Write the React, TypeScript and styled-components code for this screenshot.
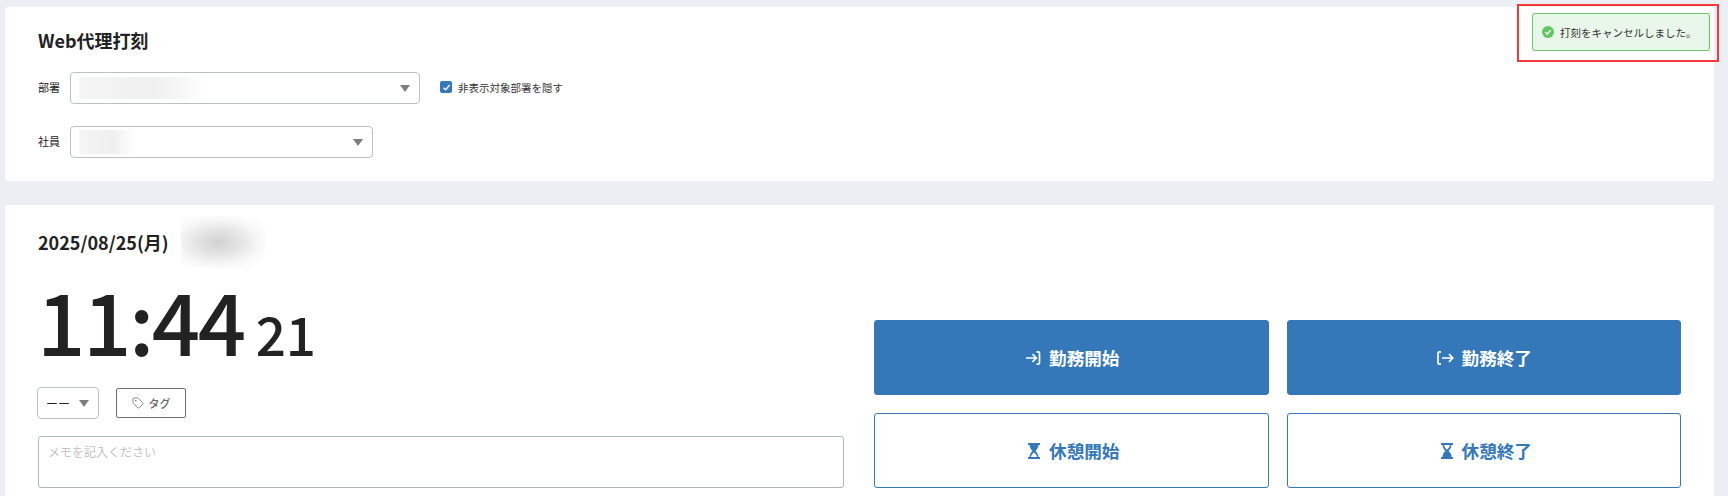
import styled, { createGlobalStyle } from 'styled-components';
import { Tag } from 'lucide-react';

const BLUE = '#3478b9';

const GlobalStyle = createGlobalStyle`
  html, body {
    margin: 0;
    height: 100%;
    overflow: hidden;
    background: #ebeef3;
  }
  * { box-sizing: border-box; }
  body {
    font-family: "Noto Sans CJK JP", "Noto Sans", sans-serif;
    color: #222;
  }
`;

const Page = styled.div`
  height: 496px;
  overflow: hidden;
  padding: 7px 14px 0 5px;
  display: flex;
  flex-direction: column;
  gap: 24px;
`;

const Card = styled.section`
  background: #fff;
  border-radius: 3px;
  padding: 0 33px 0 32px;
  flex: none;
`;

const FormCard = styled(Card)`
  height: 174px;
  padding-top: 20px;
`;

const Title = styled.h2`
  margin: 0 0 18px 1px;
  font-size: 18px;
  line-height: 27px;
  font-weight: 700;
`;

const FormRow = styled.div`
  display: flex;
  align-items: center;
  height: 32px;
  margin-bottom: 22px;
`;

const FieldLabel = styled.span`
  width: 33px;
  padding: 0 0 2px 1px;
  font-size: 11px;
`;

const SelectBox = styled.div<{ $width: number }>`
  position: relative;
  width: ${(p) => p.$width}px;
  height: 32px;
  background: #fff;
  border: 1px solid #b9bfc7;
  border-radius: 4px;
  display: flex;
  align-items: center;
  justify-content: space-between;
  padding: 0 9px 0 8px;
`;

const Caret = styled.i`
  width: 0;
  height: 0;
  border-left: 5px solid transparent;
  border-right: 5px solid transparent;
  border-top: 7px solid #7d7d7d;
`;

const Blur = styled.span<{ $width: number; $height: number }>`
  display: block;
  width: ${(p) => p.$width}px;
  height: ${(p) => p.$height}px;
  background: linear-gradient(90deg, #f5f5f5 0%, #efefef 60%, #fff 100%);
`;

const CheckWrap = styled.label`
  display: flex;
  align-items: center;
  gap: 6px;
  margin-left: 20px;
  padding-bottom: 2px;
  font-size: 10.5px;
  color: #333;
`;

const CheckBox = styled.span`
  width: 12px;
  height: 12px;
  border-radius: 2px;
  background: ${BLUE};
  display: flex;
  align-items: center;
  justify-content: center;
`;

const ClockCard = styled(Card)`
  padding-top: 15px;
  padding-bottom: 30px;
`;

const DateRow = styled.div`
  display: flex;
  align-items: center;
  height: 47px;
  padding: 0 0 4px 1px;
  gap: 12px;
`;

const DateText = styled.span`
  font-size: 18px;
  font-weight: 700;
`;

const NameBlur = styled.span`
  width: 84px;
  height: 52px;
  background: radial-gradient(ellipse at 44% 50%, #d2d2d2 0%, #e2e2e2 30%, #f7f7f7 62%, #fff 85%);
`;

const ClockBody = styled.div`
  display: grid;
  grid-template-columns: 808px 1fr;
  column-gap: 29px;
  align-items: end;
`;

const ClockColumn = styled.div`
  display: flex;
  flex-direction: column;
`;

const Time = styled.div`
  display: flex;
  align-items: baseline;
  height: 118px;
  line-height: 104px;
  gap: 12px;
  color: #222;
`;

const HourMinute = styled.span`
  font-size: 85px;
  font-weight: 500;
  letter-spacing: -2.5px;
`;

const Seconds = styled.span`
  font-size: 53px;
  font-weight: 500;
`;

const ControlRow = styled.div`
  display: flex;
  align-items: center;
  gap: 17px;
  margin-top: 2px;
`;

const TagButton = styled.button`
  width: 70px;
  height: 30px;
  background: #fff;
  border: 1px solid #6f6f6f;
  border-radius: 2px;
  display: flex;
  align-items: center;
  justify-content: center;
  gap: 5px;
  font: 500 11px "Noto Sans CJK JP", sans-serif;
  color: #666;
`;

const Memo = styled.div`
  height: 52px;
  margin: 17px 1px 0;
  border: 1px solid #aeb5bd;
  border-radius: 3px;
  padding: 6px 9px;
  font-size: 12px;
  color: #c4c4c4;
`;

const ButtonGrid = styled.div`
  display: grid;
  grid-template-columns: 1fr 1fr;
  gap: 18px;
`;

const ActionButton = styled.button<{ $filled?: boolean }>`
  height: 75px;
  border-radius: 3px;
  border: 1px solid ${BLUE};
  background: ${(p) => (p.$filled ? BLUE : '#fff')};
  color: ${(p) => (p.$filled ? '#fff' : BLUE)};
  display: flex;
  align-items: center;
  justify-content: center;
  gap: 8px;
  font: 700 17.6px "Noto Sans CJK JP", sans-serif;
`;

const Toast = styled.div`
  position: absolute;
  top: 13px;
  left: 1532px;
  width: 178px;
  height: 38px;
  background: #e9f7ea;
  border: 1px solid #69c968;
  border-radius: 3px;
  display: flex;
  align-items: center;
  gap: 6px;
  padding-left: 9px;
  font-size: 10.5px;
  color: #333;
`;

const Highlight = styled.div`
  position: absolute;
  top: 4px;
  left: 1517px;
  width: 202px;
  height: 58px;
  border: 2px solid #f33a3a;
`;

const LoginIcon = () => (
  <svg width="18" height="16" viewBox="0 0 18 16" fill="none" stroke="currentColor" strokeWidth="1.7">
    <path d="M3 8h10M9.5 4.2 13.3 8l-3.8 3.8" />
    <path d="M13.5 1.8H15c1 0 1.5.6 1.5 1.5v9.4c0 .9-.5 1.5-1.5 1.5h-1.5" />
  </svg>
);

const LogoutIcon = () => (
  <svg width="18" height="16" viewBox="0 0 18 16" fill="none" stroke="currentColor" strokeWidth="1.7">
    <path d="M5 1.8H3.5C2.5 1.8 2 2.4 2 3.3v9.4c0 .9.5 1.5 1.5 1.5H5" />
    <path d="M6 8h11M13 4.2 16.8 8 13 11.8" />
  </svg>
);

const Hourglass = ({ end }: { end?: boolean }) => (
  <svg width="18" height="16" viewBox="0 0 18 16" fill="currentColor">
    <rect x="5" y="0" width="12" height="2" />
    <rect x="5" y="14" width="12" height="2" />
    {end ? (
      <path d="M6.5 2h1.5c.4 2 1.7 3.6 3 4.4 1.3-.8 2.6-2.4 3-4.4h1.5c-.3 2.7-1.6 4.7-3 6 2 1.3 3 3.7 3 6h-9c0-2.3 1-4.7 3-6-1.4-1.3-2.7-3.3-3-6Z" />
    ) : (
      <path d="M6.5 2h9c-.3 2.7-1.6 4.7-3 6 1.4 1.3 2.7 3.3 3 6H14c-.4-2-1.7-3.6-3-4.4-1.3.8-2.6 2.4-3 4.4H6.5c.3-2.7 1.6-4.7 3-6-1.4-1.3-2.7-3.3-3-6Z" />
    )}
  </svg>
);

export default function App() {
  return (
    <>
      <GlobalStyle />
      <Page>
        <FormCard>
          <Title>Web代理打刻</Title>
          <FormRow>
            <FieldLabel>部署</FieldLabel>
            <SelectBox $width={350}>
              <Blur $width={127} $height={22} />
              <Caret />
            </SelectBox>
            <CheckWrap>
              <CheckBox>
                <svg width="9" height="9" viewBox="0 0 9 9" fill="none" stroke="#fff" strokeWidth="1.3">
                  <path d="M1.5 4.8 3.6 6.8 7.6 2" />
                </svg>
              </CheckBox>
              非表示対象部署を隠す
            </CheckWrap>
          </FormRow>
          <FormRow>
            <FieldLabel>社員</FieldLabel>
            <SelectBox $width={303}>
              <Blur $width={56} $height={24} />
              <Caret />
            </SelectBox>
          </FormRow>
        </FormCard>
        <ClockCard>
          <DateRow>
            <DateText>2025/08/25(月)</DateText>
            <NameBlur />
          </DateRow>
          <ClockBody>
            <ClockColumn>
              <Time>
                <HourMinute>11:44</HourMinute>
                <Seconds>21</Seconds>
              </Time>
              <ControlRow>
                <SelectBox $width={62}>
                  <span style={{ fontSize: 12 }}>ーー</span>
                  <Caret />
                </SelectBox>
                <TagButton>
                  <Tag size={12} strokeWidth={1.5} />
                  タグ
                </TagButton>
              </ControlRow>
              <Memo>メモを記入ください</Memo>
            </ClockColumn>
            <ButtonGrid>
              <ActionButton $filled>
                <LoginIcon />
                勤務開始
              </ActionButton>
              <ActionButton $filled>
                <LogoutIcon />
                勤務終了
              </ActionButton>
              <ActionButton>
                <Hourglass />
                休憩開始
              </ActionButton>
              <ActionButton>
                <Hourglass end />
                休憩終了
              </ActionButton>
            </ButtonGrid>
          </ClockBody>
        </ClockCard>
      </Page>
      <Toast>
        <svg width="12" height="12" viewBox="0 0 12 12">
          <circle cx="6" cy="6" r="6" fill="#5fc662" />
          <path d="M3.3 6.2 5.2 8 8.7 4.3" fill="none" stroke="#fff" strokeWidth="1.3" />
        </svg>
        打刻をキャンセルしました。
      </Toast>
      <Highlight />
    </>
  );
}
